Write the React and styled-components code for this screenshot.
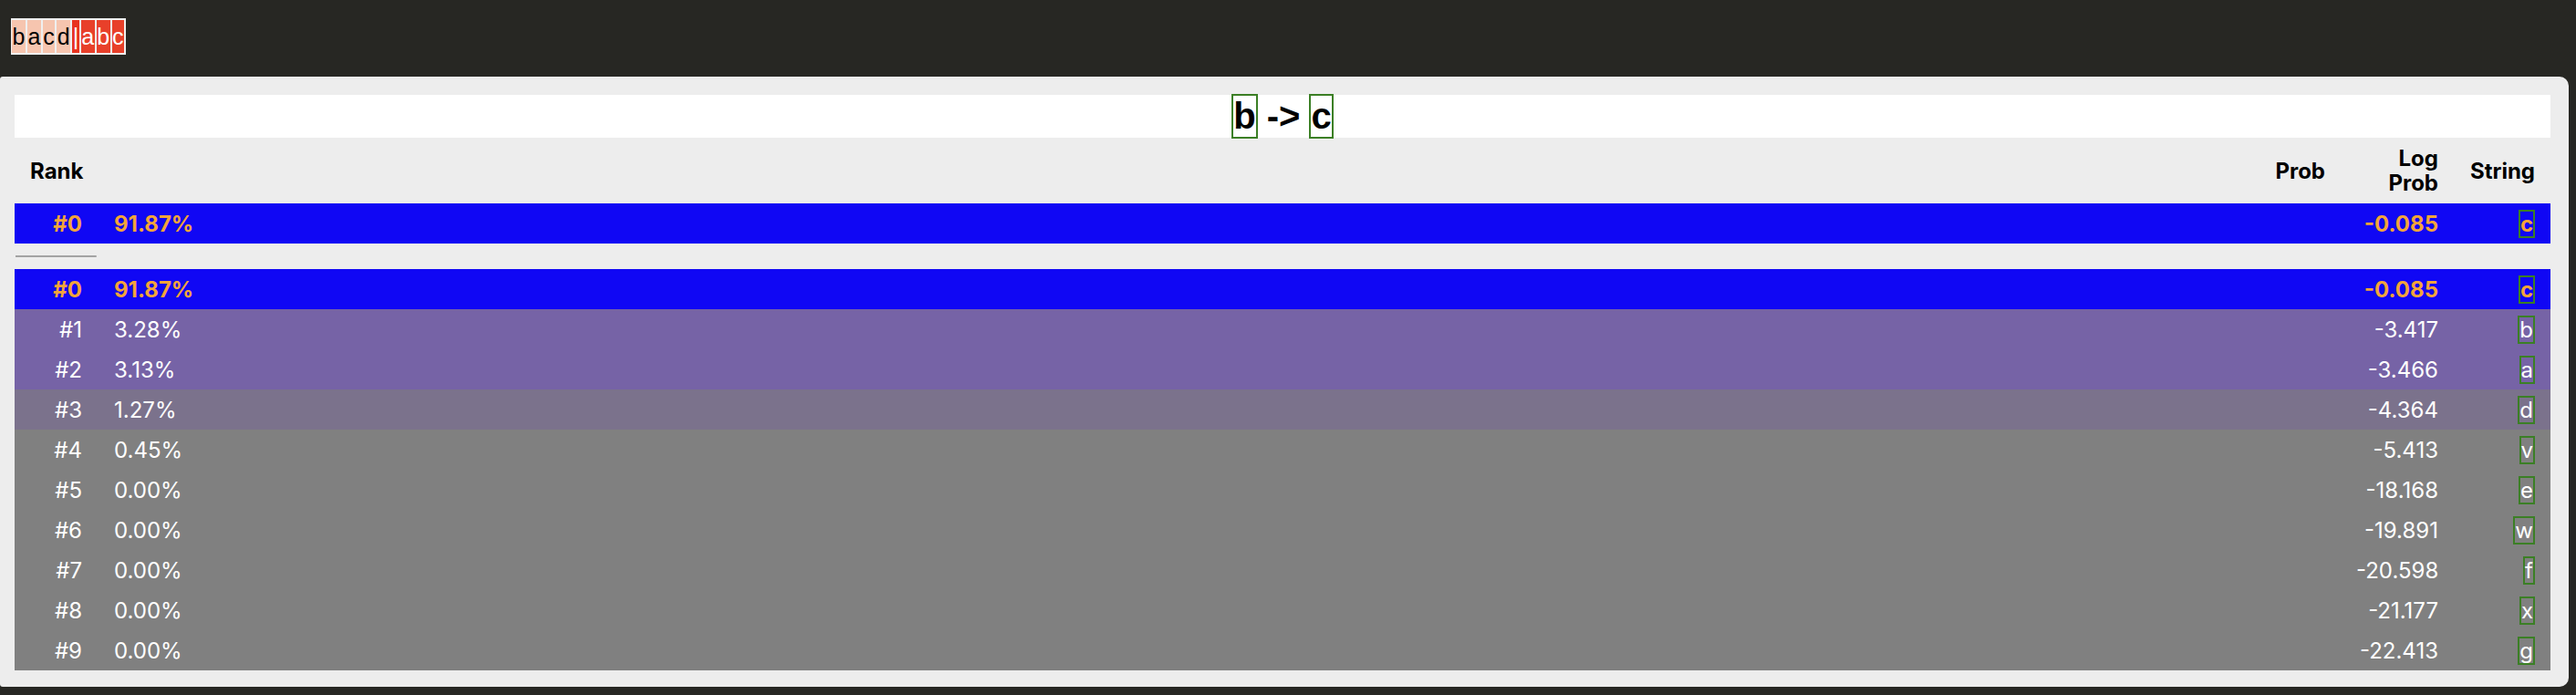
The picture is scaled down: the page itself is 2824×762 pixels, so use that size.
import React from 'react';
import styled, { createGlobalStyle } from 'styled-components';

const DARK = '#272723';
const PANEL = '#ededed';
const BLUE = '#1007f4';
const ORANGE = '#f2a43a';
const GREEN = '#3b7f25';

const GlobalStyle = createGlobalStyle`
  html, body {
    margin: 0;
    padding: 0;
    background: ${DARK};
    height: 762px;
    overflow: hidden;
  }
  body {
    font-family: Inter, "Noto Sans", sans-serif;
  }
`;

const Page = styled.div`
  display: flex;
  flex-direction: column;
  padding-top: 20px;
`;

const TokenStrip = styled.div`
  display: flex;
  align-self: flex-start;
  gap: 2px;
  margin-left: 12px;
  padding: 2px 2px 2px 1px;
  background: #efefef;
  font-family: "Liberation Sans", Arial, sans-serif;
  font-size: 25px;
`;

const Token = styled.span`
  display: block;
  line-height: 36px;
  padding: 0 0.5px;
  min-width: ${({ narrow }) => (narrow ? '6px' : '0')};
  text-align: center;
  background: ${({ bg }) => bg};
  color: ${({ fg }) => fg};
`;

const Panel = styled.div`
  margin-top: 24px;
  width: 2816px;
  box-sizing: border-box;
  background: ${PANEL};
  border-radius: 3px 10px 10px 3px;
  padding: 20px 20px 18px 16px;
`;

const TitleBar = styled.div`
  height: 47px;
  background: #ffffff;
  display: flex;
  align-items: center;
  justify-content: center;
  gap: 10px;
  font-family: "Liberation Sans", Arial, sans-serif;
  font-weight: bold;
  font-size: 40px;
  color: #000;
`;

const CharBox = styled.span`
  display: inline-block;
  border: 2px solid ${GREEN};
  line-height: ${({ lh }) => lh || 'normal'};
`;

const Table = styled.table`
  width: 100%;
  border-collapse: collapse;
  border-spacing: 0;
  table-layout: fixed;
  font-size: 24px;
`;

const HeadRow = styled.tr`
  height: 72px;
`;

const Th = styled.th`
  font-weight: 700;
  color: #000;
  text-align: right;
  vertical-align: middle;
  padding: 0 17px;
  line-height: 27px;
`;

const Row = styled.tr`
  height: 44px;
  background: ${({ bg }) => bg};
  color: ${({ hl }) => (hl ? ORANGE : '#ffffff')};
  font-weight: ${({ hl }) => (hl ? 700 : 400)};
`;

const Td = styled.td`
  padding: 0 ${({ pr }) => pr || 17}px 0 ${({ pl }) => pl || 17}px;
  text-align: ${({ align }) => align || 'right'};
  vertical-align: middle;
  white-space: nowrap;
`;

const SepRow = styled.tr`
  height: 28px;
`;

const SepLine = styled.div`
  height: 2px;
  background: #a3a3a3;
  border-radius: 0 1px 1px 0;
`;

const tokens = [
  { t: 'b', bg: '#f6c5af', fg: '#000' },
  { t: 'a', bg: '#f6c5af', fg: '#000' },
  { t: 'c', bg: '#f6c5af', fg: '#000' },
  { t: 'd', bg: '#f6c5af', fg: '#000' },
  { t: '|', bg: '#e8331f', fg: '#fff', narrow: true },
  { t: 'a', bg: '#e8402a', fg: '#fff' },
  { t: 'b', bg: '#e8402a', fg: '#fff' },
  { t: 'c', bg: '#e8402a', fg: '#fff' },
];

const GRAY = '#808080';
const rows = [
  { rank: 0, prob: '91.87%', lp: '-0.085', s: 'c', bg: BLUE, hl: true },
  { rank: 1, prob: '3.28%', lp: '-3.417', s: 'b', bg: '#7663a6' },
  { rank: 2, prob: '3.13%', lp: '-3.466', s: 'a', bg: '#7663a6' },
  { rank: 3, prob: '1.27%', lp: '-4.364', s: 'd', bg: '#7b728c' },
  { rank: 4, prob: '0.45%', lp: '-5.413', s: 'v', bg: GRAY },
  { rank: 5, prob: '0.00%', lp: '-18.168', s: 'e', bg: GRAY },
  { rank: 6, prob: '0.00%', lp: '-19.891', s: 'w', bg: GRAY },
  { rank: 7, prob: '0.00%', lp: '-20.598', s: 'f', bg: GRAY },
  { rank: 8, prob: '0.00%', lp: '-21.177', s: 'x', bg: GRAY },
  { rank: 9, prob: '0.00%', lp: '-22.413', s: 'g', bg: GRAY },
];

const DataRow = ({ row }) => (
  <Row bg={row.bg} hl={row.hl}>
    <Td>#{row.rank}</Td>
    <Td align="left" pl={18}>{row.prob}</Td>
    <Td>{row.lp}</Td>
    <Td>
      <CharBox lh="27px">{row.s}</CharBox>
    </Td>
  </Row>
);

export default function App() {
  return (
    <>
      <GlobalStyle />
      <Page>
        <TokenStrip>
          {tokens.map((tok, i) => (
            <Token key={i} bg={tok.bg} fg={tok.fg} narrow={tok.narrow}>
              {tok.t}
            </Token>
          ))}
        </TokenStrip>
        <Panel>
          <TitleBar>
            <CharBox>b</CharBox>
            <span>-&gt;</span>
            <CharBox>c</CharBox>
          </TitleBar>
          <Table>
            <colgroup>
              <col style={{ width: 91 }} />
              <col />
              <col style={{ width: 124 }} />
              <col style={{ width: 106 }} />
            </colgroup>
            <thead>
              <HeadRow>
                <Th>Rank</Th>
                <Th>Prob</Th>
                <Th>Log Prob</Th>
                <Th>String</Th>
              </HeadRow>
            </thead>
            <tbody>
              <DataRow row={rows[0]} />
              <SepRow>
                <td>
                  <SepLine />
                </td>
                <td />
                <td />
                <td />
              </SepRow>
              {rows.map((r) => (
                <DataRow key={r.rank} row={r} />
              ))}
            </tbody>
          </Table>
        </Panel>
      </Page>
    </>
  );
}
